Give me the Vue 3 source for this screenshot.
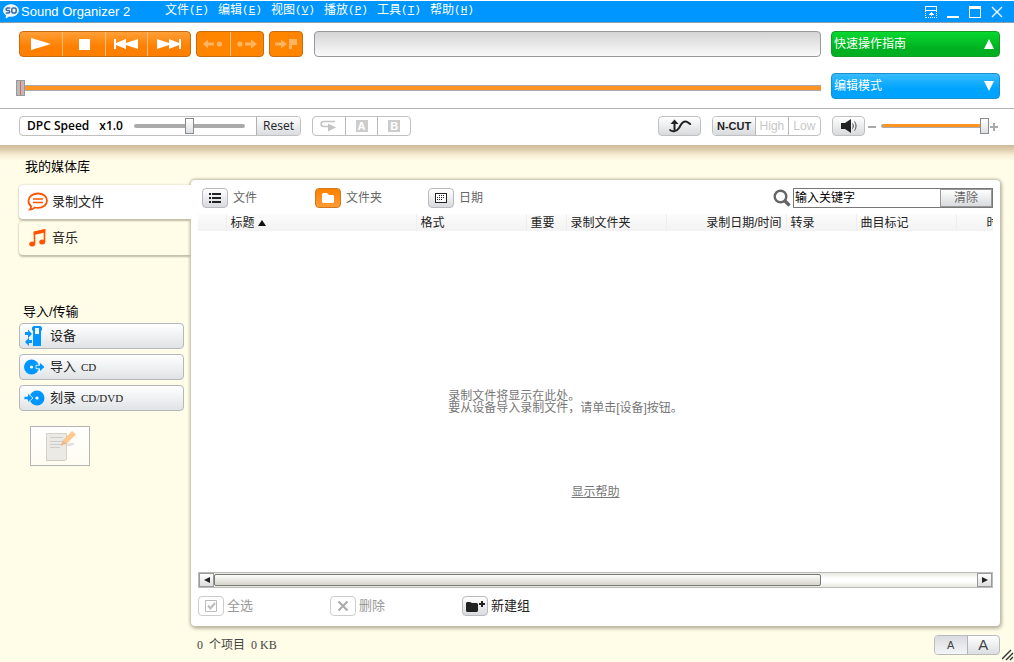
<script setup>
import { ref } from 'vue'

const menus = [
  { name: '文件', key: 'F' },
  { name: '编辑', key: 'E' },
  { name: '视图', key: 'V' },
  { name: '播放', key: 'P' },
  { name: '工具', key: 'T' },
  { name: '帮助', key: 'H' },
]
const position = ref(0)
const speed = ref(50)
const volume = ref(100)
const keyword = ref('输入关键字')
const scroll = { size: 79.5 }
</script>

<template>
  <div class="window">
    <header class="titlebar">
      <svg class="logo" width="16" height="15" viewBox="0 0 16 15" aria-hidden="true">
        <path d="M8 .8c4.200 0 7.300 2.400 7.300 5.700s-3 5.700-7.100 5.700c-.8 0-1.500-.1-2.200-.3L3.200 14l.2-2.900C1.600 10 .7 8.500.7 6.500.7 3.200 3.800.8 8 .8z" fill="#e8f4ff" stroke="#fff" />
        <path d="M7.200 4H4.500C2.600 4 2.600 6.500 4.500 6.500h.8c1.900 0 1.900 2.500 0 2.500H2.800" fill="none" stroke="#3c6aa0" stroke-width="1.500" />
        <rect x="8.800" y="4" width="4.400" height="5" rx="1.800" fill="none" stroke="#3c6aa0" stroke-width="1.500" />
      </svg>
      <h1>Sound Organizer 2</h1>
      <nav class="menus">
        <button v-for="m in menus" :key="m.key" type="button">{{ m.name }}<span class="accel">(<u>{{ m.key }}</u>)</span></button>
      </nav>
      <div class="wincontrols">
        <button type="button" aria-label="迷你模式">
          <svg width="14" height="14" viewBox="0 0 14 14" fill="none" stroke="#fff" shape-rendering="crispEdges">
            <path d="M1.500 1.500h11v4h-11z" />
            <path d="M1.500 6v7M12.500 6v7M2 12.500h11" stroke-dasharray="1 1" />
            <path d="M7.500 7v4M5 9.500h5M6 8.500h3" />
          </svg>
        </button>
        <button type="button" aria-label="最小化">
          <svg width="14" height="14" viewBox="0 0 14 14"><path d="M1 11h12v2H1z" fill="#fff" /></svg>
        </button>
        <button type="button" aria-label="最大化">
          <svg width="14" height="14" viewBox="0 0 14 14" shape-rendering="crispEdges"><path d="M1 1h12v12H1zM2 4v8h10V4z" fill="#fff" fill-rule="evenodd" /></svg>
        </button>
        <button type="button" aria-label="关闭">
          <svg width="14" height="14" viewBox="0 0 14 14"><path d="M2 2l10 10M12 2L2 12" stroke="#fff" stroke-width="1.300" /></svg>
        </button>
      </div>
    </header>

    <section class="player">
      <div class="transport">
        <div class="group main">
          <button type="button" aria-label="播放"><svg width="20" height="12" viewBox="0 0 20 12"><path d="M0 0l20 6-20 6z" fill="#fff" /></svg></button>
          <button type="button" aria-label="停止"><svg width="12" height="12" viewBox="0 0 12 12"><path d="M1 1h11v11H1z" fill="#fff" /></svg></button>
          <button type="button" aria-label="上一个"><svg width="24" height="10" viewBox="0 0 24 10"><path d="M0 0h2v4l10-4v4l12-4v10L12 6v4L2 6v4H0z" fill="#fff" /></svg></button>
          <button type="button" aria-label="下一个"><svg width="24" height="10" viewBox="0 0 24 10"><path d="M24 0h-2v4L12 0v4L0 0v10l12-4v4l10-4v4h2z" fill="#fff" /></svg></button>
        </div>
        <div class="group marks">
          <button type="button" disabled aria-label="上一标记"><svg width="20" height="10" viewBox="0 0 20 10" fill="#ffb560"><path d="M0 5l5-4.500v3h6v3H5v3z" /><circle cx="16.500" cy="5" r="2.600" /></svg></button>
          <button type="button" disabled aria-label="下一标记"><svg width="20" height="10" viewBox="0 0 20 10" fill="#ffb560"><path d="M20 5l-6-4.500v3H8v3h6v3z" /><circle cx="3" cy="5" r="2.600" /></svg></button>
        </div>
        <div class="group flag">
          <button type="button" disabled aria-label="添加标记"><svg width="22" height="12" viewBox="0 0 22 12" fill="#ffb560"><path d="M12 6L6 1.500v3H0v3h6v3zM14 1h8v6h-5v4h-3z" /></svg></button>
        </div>
        <div class="display"></div>
      </div>
      <button type="button" class="side green">快速操作指南<svg width="10" height="10" viewBox="0 0 10 10"><path d="M5 0l5 10H0z" fill="#fff" /></svg></button>
      <input v-model="position" class="seek" type="range" min="0" max="100" aria-label="播放位置" />
      <button type="button" class="side blue">编辑模式<svg width="10" height="10" viewBox="0 0 10 10"><path d="M0 0h10L5 10z" fill="#fff" /></svg></button>
    </section>

    <section class="tools">
      <div class="box dpc">
        <label for="speed"><span>DPC Speed</span><span>x1.0</span></label>
        <input id="speed" v-model="speed" type="range" min="0" max="100" />
        <button type="button">Reset</button>
      </div>
      <div class="box trio">
        <button type="button" disabled aria-label="重复"><svg width="17" height="12" viewBox="0 0 17 12"><path d="M15 1.500H4c-4 0-4 5 0 5h6" fill="none" stroke="#c4c4c4" stroke-width="1.500" /><path d="M8 3.500l8 4-8 4z" fill="#c4c4c4" /></svg></button>
        <button type="button" disabled class="point a"><span>A</span></button>
        <button type="button" disabled class="point b"><span>B</span></button>
      </div>
      <div class="right">
        <button type="button" class="box wave" aria-label="声音效果"><svg width="24" height="14" viewBox="0 0 24 14"><path d="M1.500 10.500c2 2.500 7 2.500 9.500-1.500 2-3.500 3-6.500 6.500-6.500 3 0 3.500 3 5.500 2.500" fill="none" stroke="#222" stroke-width="2" /><path d="M6.500 11V4" stroke="#222" stroke-width="2" /><path d="M2.500 5l4-4.500 4 4.500z" fill="#222" /></svg></button>
        <div class="box cut">
          <button type="button" class="on">N-CUT</button>
          <button type="button" disabled>High</button>
          <button type="button" disabled>Low</button>
        </div>
        <button type="button" class="box speaker" aria-label="静音"><svg width="18" height="14" viewBox="0 0 18 14"><path d="M1 4h4l6-4v14l-6-4H1z" fill="#222" /><path d="M12.500 4.500c1 1.500 1 3.500 0 5M14.500 2.500c2 2.500 2 6.500 0 9" fill="none" stroke="#444" /></svg></button>
        <div class="volume">
          <svg width="8" height="10" viewBox="0 0 8 10"><path d="M0 5h8v2H0z" fill="#aaa" /></svg>
          <input v-model="volume" type="range" min="0" max="100" aria-label="音量" />
          <svg width="8" height="10" viewBox="0 0 8 10"><path d="M0 5h3V2h2v3h3v2H5v3H3V7H0z" fill="#aaa" /></svg>
        </div>
      </div>
    </section>

    <main class="body">
      <aside class="sidebar">
        <h2>我的媒体库</h2>
        <button type="button" class="tab active">
          <svg width="22" height="20" viewBox="0 0 22 20" fill="none" stroke="#ff5500" stroke-width="1.800"><path d="M11 1.500c5.200 0 9 2.800 9 6.900 0 4.200-3.800 7.500-9 7.500-1.200 0-2.300-.1-3.300-.4-1.200 1.500-2.500 2-4.700 2 .8-.9 1.200-1.800 1-3.400C2.200 12.800 1.500 10.800 1.500 8.700c0-4.100 4.300-7.200 9.500-7.200z" /><path d="M6 7h10M6 10.500h10" stroke-width="1.600" /></svg>
          录制文件
        </button>
        <button type="button" class="tab">
          <svg width="22" height="20" viewBox="0 0 22 20"><path d="M7.500 16V4.500l10-2.500v12" fill="none" stroke="#ff5500" stroke-width="1.600" /><path d="M6.700 3.500l11.600-2.500v3.500L6.700 7z" fill="#ff5500" /><ellipse cx="5.200" cy="16" rx="3" ry="2.500" fill="#ff5500" /><ellipse cx="15.200" cy="14" rx="3" ry="2.500" fill="#ff5500" /></svg>
          音乐
        </button>
        <h2 class="second">导入/传输</h2>
        <button type="button" class="action">
          <svg width="22" height="20" viewBox="0 0 22 20" fill="#0096ff"><path d="M8 1.500L9.500 0h7L18 1.500V4l-1 1v15H9V5L8 4z" /><path d="M11 2h4v6h-4z" fill="#fff" /><path d="M1 6h3V3.500L8 8l-4 4V9H1zM8 14H5v-2.500L1 16l4 4v-3h3z" /></svg>
          设备
        </button>
        <button type="button" class="action">
          <svg width="22" height="20" viewBox="0 0 22 20" fill="#0096ff"><circle cx="7.500" cy="10" r="7.500" /><circle cx="7.500" cy="10" r="1.600" fill="#fff" /><path d="M12 8.300h3.500V5l5.500 5-5.500 5v-3.300H12z" stroke="#fff" stroke-width=".8" /></svg>
          导入<span class="latin">CD</span>
        </button>
        <button type="button" class="action">
          <svg width="22" height="20" viewBox="0 0 22 20" fill="#0096ff"><circle cx="13" cy="10" r="7.500" /><circle cx="13" cy="10" r="1.600" fill="#fff" /><path d="M0 8.300h3.500V5L9 10l-5.500 5v-3.300H0z" stroke="#fff" stroke-width=".8" /></svg>
          刻录<span class="latin">CD/DVD</span>
        </button>
        <button type="button" class="note" disabled aria-label="编辑备注">
          <svg width="34" height="34" viewBox="0 0 34 34">
            <path d="M20 16c5-2 10-3 12-1-2 2-8 3-12 1z" fill="#e4e2dc" />
            <path d="M3.500 4.500h20v26l-2 1h-18z" fill="#eceae5" stroke="#d4d1cb" />
            <path d="M3 31.500h19" stroke="#cfccc6" />
            <path d="M7 8.500h13M7 12.500h13M7 15.500h12M7 18.500h10" stroke="#ccc" />
            <path d="M20 11L29 2l4 3.500-9 9z" fill="#ffc98f" /><path d="M20 11l-2.500 6 6.500-2.500z" fill="#eab98d" />
          </svg>
        </button>
      </aside>

      <div class="content">
        <section class="panel">
          <div class="views">
            <button type="button"><i class="chip"><svg width="14" height="12" viewBox="0 0 14 12" fill="#222"><path d="M1 1h2v2H1zM1 5h2v2H1zM1 9h2v2H1zM4 1h9v2H4zM4 5h9v2H4zM4 9h9v2H4z" /></svg></i>文件</button>
            <button type="button"><i class="chip on"><svg width="12" height="10" viewBox="0 0 12 10"><path d="M0 1l1-1h4l2 2h4l1 1v6l-1 1H1L0 9z" fill="#fff" /></svg></i>文件夹</button>
            <button type="button"><i class="chip"><svg width="12" height="10" viewBox="0 0 12 10" shape-rendering="crispEdges"><path d="M.5.500h11v9H.5z" fill="#fff" stroke="#222" /><path d="M4 2.500h6M2 4.500h8M2 6.500h6" stroke="#222" stroke-dasharray="1 1" /></svg></i>日期</button>
            <div class="search">
              <svg width="18" height="18" viewBox="0 0 18 18" fill="none" stroke="#666"><circle cx="7.500" cy="7.500" r="5.800" stroke-width="2.400" /><path d="M11.500 11.500l5 5" stroke-width="3.400" /></svg>
              <div class="field">
                <input v-model="keyword" type="text" aria-label="搜索" />
                <button type="button">清除</button>
              </div>
            </div>
          </div>
          <div class="list">
            <table>
              <colgroup>
                <col class="c28" /><col class="c190" /><col class="c110" /><col class="c40" /><col class="c100" /><col class="c120" /><col class="c70" /><col class="c100" /><col class="c100" />
              </colgroup>
              <thead>
                <tr>
                  <th></th>
                  <th>标题<svg width="8" height="6" viewBox="0 0 8 6"><path d="M4 0l4 6H0z" fill="#111" /></svg></th>
                  <th>格式</th>
                  <th>重要</th>
                  <th>录制文件夹</th>
                  <th class="end">录制日期/时间</th>
                  <th>转录</th>
                  <th>曲目标记</th>
                  <th class="far">时间</th>
                </tr>
              </thead>
            </table>
            <div class="empty">
              <p>录制文件将显示在此处。<br />要从设备导入录制文件，请单击[设备]按钮。</p>
              <a href="#help">显示帮助</a>
            </div>
          </div>
          <div class="scrollbar">
            <button type="button" aria-label="向左"><svg width="6" height="6" viewBox="0 0 6 6"><path d="M6 0v6L0 3z" fill="#222" /></svg></button>
            <div class="track"><div class="thumb" :style="{ width: scroll.size + '%' }"></div></div>
            <button type="button" aria-label="向右"><svg width="6" height="6" viewBox="0 0 6 6"><path d="M0 0v6l6-3z" fill="#222" /></svg></button>
          </div>
          <div class="actions">
            <button type="button" disabled><i class="chip"><svg width="14" height="14" viewBox="0 0 14 14" fill="none" stroke="#bbb"><path d="M1.500 1.500h11v11h-11z" /><path d="M4 6.500L6.500 9.500 11 4" stroke-width="2" /></svg></i>全选</button>
            <button type="button" disabled><i class="chip"><svg width="12" height="12" viewBox="0 0 12 12"><path d="M1.500 1.500l9 9M10.500 1.500l-9 9" stroke="#aaa" stroke-width="2" /></svg></i>删除</button>
            <button type="button"><i class="chip"><svg width="20" height="14" viewBox="0 0 20 14" fill="#222"><path d="M1 4l1-1h3l2 1h5l1 1v7l-1 1H2l-1-1z" /><path d="M14 4h2V2h2v2h2v2h-2v2h-2V6h-2z" /></svg></i>新建组</button>
          </div>
        </section>
        <footer class="status">
          <span>0&nbsp; 个项目&nbsp; 0 KB</span>
          <div class="sizes">
            <button type="button" class="small">A</button>
            <button type="button" class="large">A</button>
          </div>
        </footer>
      </div>
      <svg class="grip" width="12" height="12" viewBox="0 0 12 12"><path d="M0 10l9-9M4 11l7-7M8 11l3-3" stroke="#333" stroke-width="1.400" /></svg>
    </main>
  </div>
</template>

<style>
body {
  background: #fffce8;
}
</style>

<style scoped>
.window {
  display: flex;
  flex-direction: column;
  min-height: 100vh;
  color: #222;
  font: 12px/16px "Liberation Sans", "Noto Sans CJK SC", sans-serif;
}
.window *,
.window {
  box-sizing: border-box;
}
button,
input {
  margin: 0;
  padding: 0;
  border: 0;
  background: none;
  color: inherit;
  font: inherit;
}
svg {
  display: block;
  flex: none;
}
button {
  display: flex;
  align-items: center;
  justify-content: center;
  white-space: nowrap;
}

.titlebar {
  display: flex;
  align-items: center;
  height: 23px;
  padding: 0 10px 0 3px;
  border-top: 1px solid #fff;
  border-bottom: 1px solid #8b9eae;
  background: #0096ff;
  color: #fff;
}
.titlebar h1 {
  width: 144px;
  margin: 0 0 0 2px;
  font-size: 13px;
  font-weight: 400;
  line-height: 20px;
}
.menus {
  display: flex;
  gap: 9px;
  height: 100%;
  align-items: flex-start;
}
.menus button {
  width: 44px;
  line-height: 18px;
}
.accel {
  font: 11px/18px "Liberation Mono", monospace;
}
.wincontrols {
  display: flex;
  gap: 8px;
  margin-left: auto;
}

.player {
  display: grid;
  grid-template-columns: minmax(0, 1fr) 169px;
  gap: 16px 10px;
  padding: 8px 14px 9px 19px;
  border-bottom: 1px solid #b4b4b4;
  background: #fff;
}
.transport {
  display: flex;
  height: 26px;
}
.group {
  display: flex;
  border: 1px solid #c86c10;
  border-radius: 4px;
  background: linear-gradient(#ff9f38, #ff8000 60%, #ff8000);
  overflow: hidden;
}
.group button {
  flex: 1;
}
.group button + button {
  border-left: 1px solid #ffc07c;
}
.main {
  width: 172px;
}
.marks {
  width: 68px;
  margin-left: 5px;
}
.flag {
  width: 34px;
  margin: 0 11px 0 5px;
}
.marks,
.flag {
  background: #ff8400;
}
.display {
  flex: 1;
  border: 1px solid #9a9a9a;
  border-radius: 4px;
  background: linear-gradient(#d4d4d4, #fafafa);
}
.side {
  justify-content: space-between;
  height: 26px;
  padding: 0 5px 0 2px;
  border-radius: 4px;
  color: #fff;
}
.green {
  border: 1px solid #149a28;
  background: linear-gradient(#08d830, #00b020 70%);
}
.blue {
  border: 1px solid #1b8fcb;
  background: linear-gradient(#38bcff, #00a4ff 60%);
}

input[type="range"] {
  -webkit-appearance: none;
  appearance: none;
  min-width: 0;
}
input[type="range"]::-webkit-slider-thumb {
  -webkit-appearance: none;
  box-sizing: border-box;
  width: 9px;
  height: 16px;
  border: 1px solid #8c8c8c;
  background: linear-gradient(#fff, #dde0e3);
}
.seek {
  align-self: center;
  height: 16px;
  margin: 4px 0 0 -3px;
}
.seek::-webkit-slider-runnable-track {
  height: 6px;
  border: solid #aaa;
  border-width: 1px 0;
  background: #ff9424;
}
.player input.seek::-webkit-slider-thumb {
  margin-top: -6px;
  border-color: #999;
  background: linear-gradient(90deg, #bbb 3px, #e06060 3px, #e06060 4px, #bbb 4px);
}

.tools {
  display: flex;
  align-items: center;
  gap: 11px;
  height: 36px;
  padding: 0 14px 2px 19px;
  background: #fff;
}
.box {
  display: flex;
  height: 20px;
  border: 1px solid #c0c0c0;
  border-radius: 4px;
  overflow: hidden;
}
.dpc {
  width: 282px;
  align-items: center;
  padding-left: 7px;
}
.dpc label {
  display: flex;
  gap: 10px;
  color: #000;
  font: 600 12px/18px "Open Sans", sans-serif;
}
.dpc input {
  flex: 1;
  margin: 0 11px;
}
.dpc input::-webkit-slider-runnable-track {
  height: 4px;
  border-radius: 2px;
  background: #aaa;
}
.dpc input::-webkit-slider-thumb {
  margin-top: -6px;
}
.dpc button {
  width: 44px;
  height: 20px;
  border-left: 1px solid #b0b0b0;
  background: linear-gradient(#fff, #d8dadd);
  font: 12px/18px "Open Sans", sans-serif;
}
.trio {
  width: 99px;
}
.trio button {
  flex: 1;
}
.trio button + button,
.cut button + button {
  border-left: 1px solid #b8b8b8;
}
.point span {
  width: 12px;
  height: 12px;
  background: #ccc;
  color: #fff;
  font-size: 11px;
  font-weight: 700;
  line-height: 12px;
}
.right {
  display: flex;
  gap: 11px;
  margin-left: auto;
}
.wave,
.speaker,
.cut .on {
  background: linear-gradient(#fff, #d8dadd);
}
.wave {
  width: 43px;
}
.cut {
  width: 109px;
  color: #c8c8c8;
}
.cut button {
  width: 32px;
}
.cut .on {
  width: 43px;
  color: #222;
  font-size: 11px;
  font-weight: 700;
}
.cut button + button {
  width: 33px;
}
.speaker {
  width: 33px;
}
.volume {
  display: flex;
  align-items: center;
  margin-left: -8px;
  width: 132px;
  padding-right: 2px;
}
.volume input {
  flex: 1;
  margin: 0 1px 0 5px;
}
.volume input::-webkit-slider-runnable-track {
  height: 4px;
  border-bottom: 1px solid #aaa;
  border-left: 2px solid #aaa;
  border-radius: 2px;
  background: #ff9424;
}
.volume input::-webkit-slider-thumb {
  margin-top: -6px;
}

.body {
  position: relative;
  display: flex;
  flex: 1;
  background: linear-gradient(#cfba98, #e0d0b2 5px, #f8efd4 10px, #fffce8 16px);
}
.sidebar {
  width: 191px;
  padding: 14px 0 0 19px;
}
.sidebar h2 {
  margin: 0 0 10px;
  padding-left: 6px;
  color: #000;
  font-size: 13px;
  font-weight: 400;
  line-height: 16px;
}
.tab {
  position: relative;
  justify-content: flex-start;
  gap: 3px;
  width: 172px;
  height: 34px;
  margin-bottom: 2px;
  padding-left: 8px;
  border-radius: 4px 0 0 4px;
  background: #fffce8;
  box-shadow: 0 0 2px #c8c4b0, 0 2px 2px #c2bda8;
  font-size: 13px;
}
.tab.active {
  z-index: 2;
  background: #fff;
  clip-path: inset(-4px 0 -4px -4px);
}
.sidebar .second {
  margin: 49px 0 3px;
  padding-left: 4px;
}
.action {
  justify-content: flex-start;
  gap: 4px;
  width: 165px;
  height: 26px;
  margin-bottom: 5px;
  padding-left: 4px;
  border: 1px solid #b4b8bc;
  border-radius: 4px;
  background: linear-gradient(#fff, #e0e3e5);
  font-size: 13px;
}
.latin {
  margin-left: 1px;
  font-family: "Liberation Serif", serif;
  font-size: 11px;
}
.note {
  width: 60px;
  height: 40px;
  margin: 15px 0 0 11px;
  border: 1px solid #b4b4b4;
  background: linear-gradient(#fff, #fffcf0);
}

.content {
  display: flex;
  flex: 1;
  flex-direction: column;
  min-width: 0;
  padding: 35px 14px 0 0;
}
.panel {
  position: relative;
  z-index: 1;
  display: flex;
  flex: 1;
  flex-direction: column;
  padding: 8px 7px 10px;
  border-radius: 4px;
  background: #fff;
  box-shadow: 0 0 3px 1px #c0bba6, 1px 2px 4px #aaa692;
}
.views {
  display: flex;
  height: 20px;
  padding-left: 4px;
  color: #666;
}
.views > button,
.actions > button {
  justify-content: flex-start;
  width: 113px;
  font-size: 12px;
}
.chip {
  display: flex;
  align-items: center;
  justify-content: center;
  width: 26px;
  height: 20px;
  margin-right: 5px;
  border: 1px solid #b8babd;
  border-radius: 4px;
  background: linear-gradient(#fff, #d8dadd);
}
.chip.on {
  border-color: #d07818;
  background: linear-gradient(#ff8000, #ff9a34);
}
.search {
  display: flex;
  align-items: center;
  gap: 2px;
  margin-left: auto;
}
.field {
  display: flex;
  width: 200px;
  height: 20px;
  border: 1px solid #777;
}
.field input {
  flex: 1;
  min-width: 0;
  padding-left: 1px;
  color: #000;
}
.field button {
  width: 52px;
  border: 1px solid #999;
  background: linear-gradient(#fff, #d8dadd);
}
.list {
  display: flex;
  flex: 1;
  flex-direction: column;
  margin-top: 6px;
  overflow: hidden;
}
table {
  width: 858px;
  table-layout: fixed;
  border-collapse: collapse;
}
.c28 { width: 28px; }
.c40 { width: 40px; }
.c70 { width: 70px; }
.c100 { width: 100px; }
.c110 { width: 110px; }
.c120 { width: 120px; }
.c190 { width: 190px; }
th {
  height: 17px;
  padding: 0 4px;
  border-right: 1px solid #eee;
  background: linear-gradient(#fcfcfc, #f2f2f2);
  font-weight: 400;
  line-height: 16px;
  text-align: left;
  white-space: nowrap;
}
th svg {
  display: inline-block;
  margin-left: 3px;
  vertical-align: 1px;
}
th.end {
  text-align: right;
}
th.far {
  padding-left: 30px;
}
.empty {
  display: flex;
  flex: 1;
  flex-direction: column;
  align-items: center;
  padding-top: 159px;
  color: #777;
}
.empty p {
  margin: 0 60px 70px 0;
  line-height: 12px;
}
.empty a {
  color: inherit;
}
.scrollbar {
  display: flex;
  height: 16px;
  border: 1px solid #bbb;
}
.scrollbar button {
  width: 15px;
  border: 1px solid #999;
  background: linear-gradient(#fff, #ddd);
}
.track {
  flex: 1;
  background: linear-gradient(#e8e8e0, #fff 40%, #fff 60%, #e8e8e0);
}
.thumb {
  height: 12px;
  margin-top: 1px;
  border: 1px solid #777;
  border-radius: 2px;
  background: linear-gradient(#fcfcfa, #d6d6cc);
}
.actions {
  display: flex;
  margin-top: 8px;
}
.actions > button {
  width: 132px;
  font-size: 13px;
}
.actions .chip {
  margin-right: 3px;
}
.actions button:disabled {
  color: #999;
}
.actions button:disabled .chip {
  border-color: #ccc;
  background: #fff;
}
.status {
  display: flex;
  align-items: center;
  justify-content: space-between;
  height: 36px;
  padding: 2px 0 0 6px;
  color: #444;
}
.status span {
  font-family: "Liberation Serif", "Noto Sans CJK SC", serif;
  font-size: 12px;
}
.sizes {
  display: flex;
  width: 66px;
  height: 20px;
  border: 1px solid #b8bac0;
  border-radius: 4px;
  overflow: hidden;
  background: linear-gradient(#fff, #dcdee2);
}
.sizes button {
  flex: 1;
}
.sizes .small {
  background: linear-gradient(#d8dbe0, #f4f5f7);
  font-size: 11px;
}
.sizes .large {
  border-left: 1px solid #b0b2b8;
  font-size: 15px;
}
.grip {
  position: absolute;
  right: 0;
  bottom: 1px;
}
</style>
